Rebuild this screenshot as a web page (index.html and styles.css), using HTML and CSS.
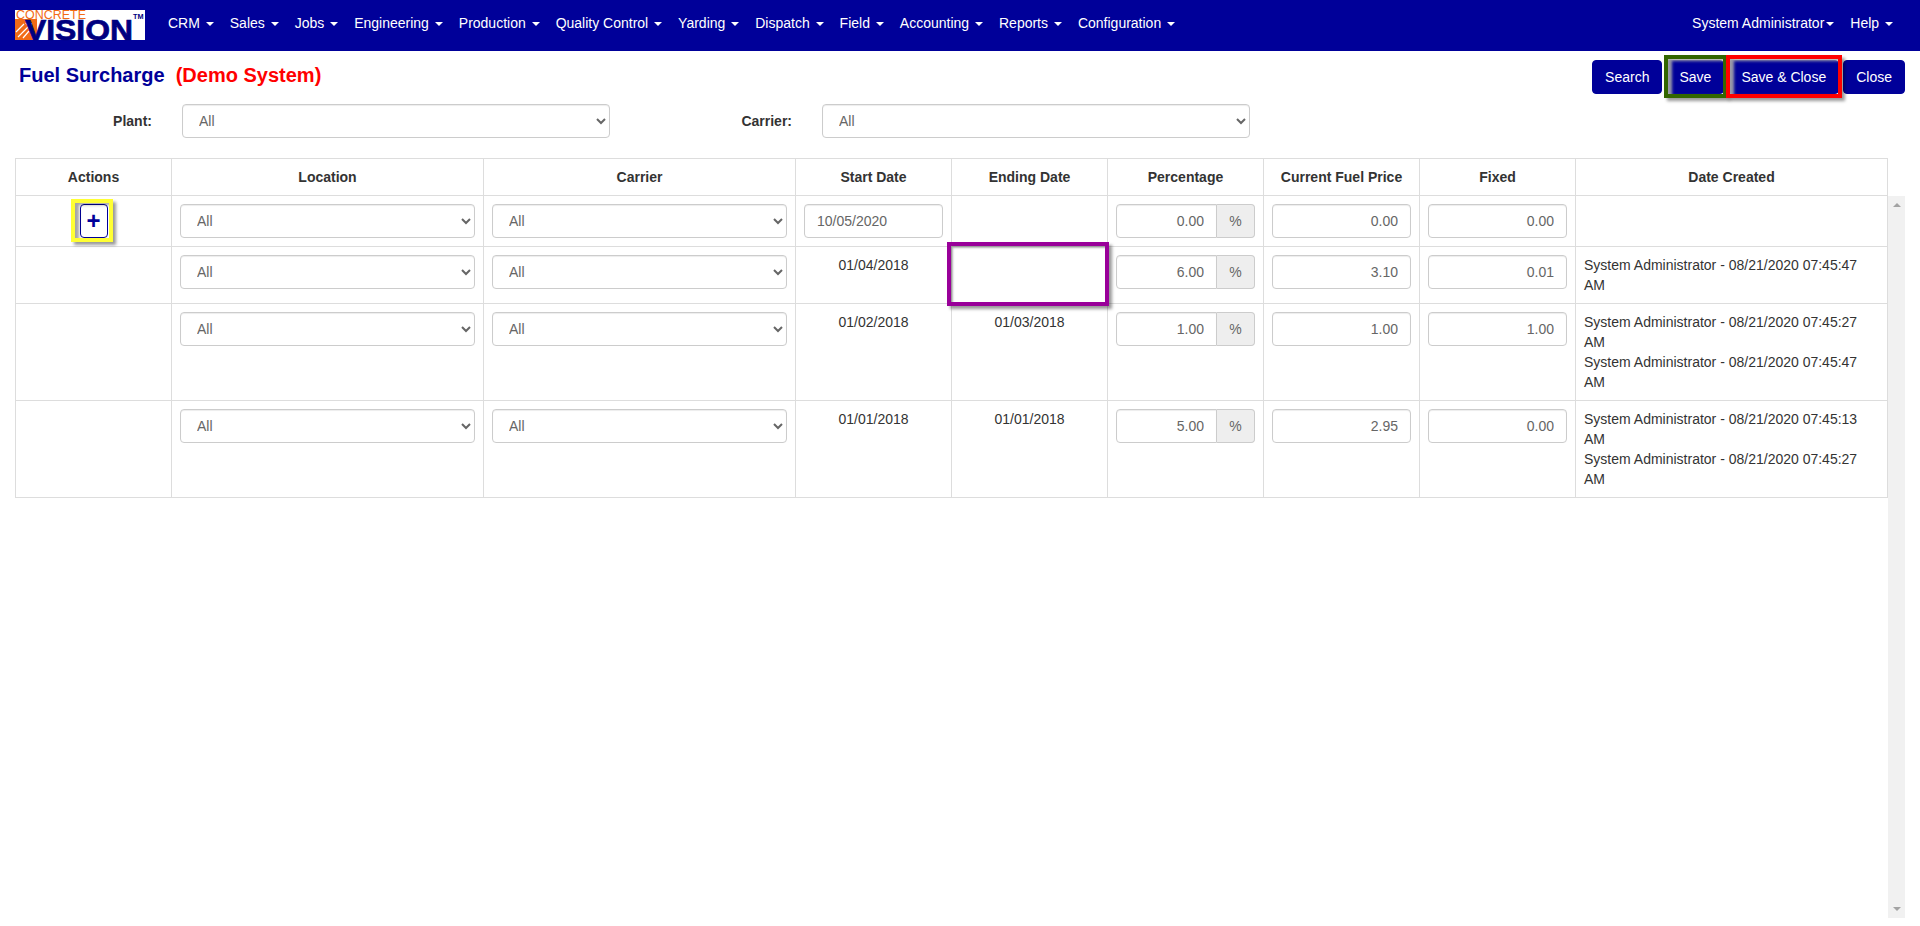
FILE: index.html
```html
<!DOCTYPE html>
<html lang="en">
<head>
<meta charset="utf-8">
<title>Fuel Surcharge</title>
<link rel="stylesheet" href="styles.css">
</head>
<body>
<nav class="navbar">
  <a class="logo" href="#">
    <svg width="130" height="40" viewBox="0 -5 130 40">
      <rect width="130" height="30" fill="#fff"/>
      <rect x="0" y="9" width="22" height="21" fill="#f26b16"/>
      <path d="M3 27 L15 15 M1 22 L9 14 M8 28 L14 21" stroke="#fff" stroke-width="1.2" fill="none"/>
      <path d="M10 13 L17 13 L17 20 Z" fill="#fff"/>
      <text x="1" y="9" class="logo-concrete" textLength="70" lengthAdjust="spacingAndGlyphs">CONCRETE</text>
      <text x="10" y="29.5" class="logo-vision" textLength="108" lengthAdjust="spacingAndGlyphs">VISION</text>
      <text x="118" y="8.7" class="logo-tm" textLength="10.5" lengthAdjust="spacingAndGlyphs">TM</text>
    </svg>
  </a>
  <ul class="menu">
    <li><a href="#">CRM <span class="caret"></span></a></li>
    <li><a href="#">Sales <span class="caret"></span></a></li>
    <li><a href="#">Jobs <span class="caret"></span></a></li>
    <li><a href="#">Engineering <span class="caret"></span></a></li>
    <li><a href="#">Production <span class="caret"></span></a></li>
    <li><a href="#">Quality Control <span class="caret"></span></a></li>
    <li><a href="#">Yarding <span class="caret"></span></a></li>
    <li><a href="#">Dispatch <span class="caret"></span></a></li>
    <li><a href="#">Field <span class="caret"></span></a></li>
    <li><a href="#">Accounting <span class="caret"></span></a></li>
    <li><a href="#">Reports <span class="caret"></span></a></li>
    <li><a href="#">Configuration <span class="caret"></span></a></li>
  </ul>
  <ul class="menu menu-right">
    <li><a href="#">System Administrator<span class="caret"></span></a></li>
    <li><a href="#">Help <span class="caret"></span></a></li>
  </ul>
</nav>

<main class="page">
  <header class="page-head">
    <h1 class="title">Fuel Surcharge <span class="demo">&nbsp;(Demo System)</span></h1>
    <div class="actions">
      <button class="btn">Search</button>
      <button class="btn ring ring-green">Save</button>
      <button class="btn ring ring-red">Save &amp; Close</button>
      <button class="btn">Close</button>
    </div>
  </header>

  <form class="filters">
    <label class="filter-label">Plant:</label>
    <select class="control"><option>All</option></select>
    <label class="filter-label">Carrier:</label>
    <select class="control"><option>All</option></select>
  </form>

  <div class="grid-wrap">
    <table class="grid">
      <colgroup>
        <col class="c1"><col class="c2"><col class="c2"><col class="c1"><col class="c1"><col class="c1"><col class="c1"><col class="c1"><col class="c2">
      </colgroup>
      <thead>
        <tr>
          <th>Actions</th><th>Location</th><th>Carrier</th><th>Start Date</th><th>Ending Date</th><th>Percentage</th><th>Current Fuel Price</th><th>Fixed</th><th>Date Created</th>
        </tr>
      </thead>
      <tbody>
        <tr>
          <td class="center"><button class="add ring ring-yellow">+</button></td>
          <td><select class="control"><option>All</option></select></td>
          <td><select class="control"><option>All</option></select></td>
          <td><input class="control" value="10/05/2020"></td>
          <td></td>
          <td><div class="group"><input class="control num" value="0.00"><span class="addon">%</span></div></td>
          <td><input class="control num" value="0.00"></td>
          <td><input class="control num" value="0.00"></td>
          <td></td>
        </tr>
        <tr>
          <td></td>
          <td><select class="control"><option>All</option></select></td>
          <td><select class="control"><option>All</option></select></td>
          <td class="center">01/04/2018</td>
          <td class="center ring-cell"></td>
          <td><div class="group"><input class="control num" value="6.00"><span class="addon">%</span></div></td>
          <td><input class="control num" value="3.10"></td>
          <td><input class="control num" value="0.01"></td>
          <td>System Administrator - 08/21/2020 07:45:47 AM</td>
        </tr>
        <tr>
          <td></td>
          <td><select class="control"><option>All</option></select></td>
          <td><select class="control"><option>All</option></select></td>
          <td class="center">01/02/2018</td>
          <td class="center">01/03/2018</td>
          <td><div class="group"><input class="control num" value="1.00"><span class="addon">%</span></div></td>
          <td><input class="control num" value="1.00"></td>
          <td><input class="control num" value="1.00"></td>
          <td>System Administrator - 08/21/2020 07:45:27 AM<br>System Administrator - 08/21/2020 07:45:47 AM</td>
        </tr>
        <tr>
          <td></td>
          <td><select class="control"><option>All</option></select></td>
          <td><select class="control"><option>All</option></select></td>
          <td class="center">01/01/2018</td>
          <td class="center">01/01/2018</td>
          <td><div class="group"><input class="control num" value="5.00"><span class="addon">%</span></div></td>
          <td><input class="control num" value="2.95"></td>
          <td><input class="control num" value="0.00"></td>
          <td>System Administrator - 08/21/2020 07:45:13 AM<br>System Administrator - 08/21/2020 07:45:27 AM</td>
        </tr>
      </tbody>
    </table>
    <div class="scrollbar"><span class="arrow-up"></span><span class="arrow-down"></span></div>
  </div>
</main>
</body>
</html>
```
FILE: styles.css
```css
* { box-sizing: border-box; }
html, body { margin: 0; height: 100%; overflow: hidden; }
body {
  font-family: "Liberation Sans", Arial, sans-serif;
  font-size: 14px;
  line-height: 20px;
  color: #333;
  background: #fff;
}

/* Navbar */
.navbar {
  display: flex;
  align-items: flex-start;
  height: 51px;
  background: #000099;
  padding-right: 19px;
}
.logo { display: block; margin: 5px 15px 0 15px; height: 40px; }
.logo svg { display: block; }
.logo-concrete { font: 12.5px "Liberation Sans", Arial, sans-serif; fill: #f26b16; }
.logo-vision { font: bold 29px "Liberation Sans", Arial, sans-serif; fill: #000080; stroke: #000080; stroke-width: .7px; }
.logo-tm { font: bold 7.5px "Liberation Sans", Arial, sans-serif; fill: #000080; }
.menu { display: flex; list-style: none; margin: 0; padding: 0; }
.menu-right { margin-left: auto; }
.menu a {
  display: block;
  padding: 13px 8px;
  color: #fff;
  text-decoration: none;
  white-space: nowrap;
}
.caret {
  display: inline-block;
  width: 0;
  height: 0;
  margin-left: 2px;
  vertical-align: middle;
  border-top: 4px solid #fff;
  border-left: 4px solid transparent;
  border-right: 4px solid transparent;
}

/* Page */
.page { padding: 9px 15px 0; }
.page-head { display: flex; justify-content: space-between; align-items: flex-start; }
.title {
  margin: 4px 0 0 4px;
  font-size: 20px;
  line-height: 22px;
  font-weight: bold;
  color: #000099;
  white-space: pre;
}
.demo { color: #f00; }
.actions { display: flex; gap: 4px; }
.btn {
  height: 34px;
  padding: 6px 12px;
  border: 1px solid #000099;
  border-radius: 4px;
  background: #000099;
  color: #fff;
  font: 14px/20px "Liberation Sans", Arial, sans-serif;
  white-space: nowrap;
}

/* Highlight rings drawn over the controls */
.ring { position: relative; }
.ring::after, .ring-cell::after {
  content: "";
  position: absolute;
  border: 4px solid;
  pointer-events: none;
  box-shadow: 3px 3px 3px rgba(0,0,0,.4), inset 4px 2px 3px rgba(170,170,170,.9);
}
.btn.ring::after { left: -3px; right: -4px; top: -6px; bottom: -5px; }
.ring-green::after { border-color: #336600; }
.ring-red::after { border-color: #f00; }
.ring-yellow::after {
  border-color: #ffff33;
  left: -10px; right: -6px; top: -6px; bottom: -5px;
  box-shadow: 3px 3px 3px rgba(0,0,0,.4), inset 4px 2px 3px rgba(0,0,0,.35);
}
.ring-cell { position: relative; }
.ring-cell::after {
  border-color: #990099;
  left: -5px; right: -2px; top: -5px; bottom: -3px;
  box-shadow: 3px 3px 3px rgba(0,0,0,.4), inset 2px 2px 2px rgba(0,0,0,.3);
  z-index: 1;
}

/* Filters */
.filters {
  display: grid;
  grid-template-columns: 167px 428px 212px 428px;
  align-items: center;
  margin-top: 10px;
}
.filter-label { text-align: right; padding-right: 30px; font-weight: bold; }

/* Form controls */
.control {
  display: block;
  width: 100%;
  height: 34px;
  padding: 6px 12px;
  border: 1px solid #ccc;
  border-radius: 4px;
  background-color: #fff;
  color: #666;
  font: 14px/20px "Liberation Sans", Arial, sans-serif;
  box-shadow: inset 0 1px 1px rgba(0,0,0,.075);
}
.num { text-align: right; }
.group { display: flex; }
.group .control { flex: 1; min-width: 0; border-radius: 4px 0 0 4px; }
.addon {
  width: 38px;
  flex: none;
  padding: 6px 0;
  text-align: center;
  color: #666;
  background: #eee;
  border: 1px solid #ccc;
  border-left: 0;
  border-radius: 0 4px 4px 0;
}

/* Grid */
.grid-wrap { display: flex; align-items: flex-start; margin-top: 20px; }
.grid {
  width: 1873px;
  flex: none;
  table-layout: fixed;
  border-collapse: collapse;
}
.c1 { width: 156px; }
.c2 { width: 312px; }
.grid th, .grid td { border: 1px solid #ddd; padding: 8px; vertical-align: top; }
.grid th { font-weight: bold; text-align: center; }
.center { text-align: center; }
.add {
  display: inline-block;
  width: 28px;
  height: 34px;
  padding: 0;
  border: 1px solid #000099;
  border-radius: 4px;
  background: #fff;
  color: #000099;
  font: bold 24px/30px "Liberation Sans", Arial, sans-serif;
  vertical-align: top;
}
.scrollbar {
  flex: none;
  display: flex;
  flex-direction: column;
  justify-content: space-between;
  align-items: center;
  width: 17px;
  height: 722px;
  margin-top: 38px;
  padding: 7px 0;
  background: #f1f1f1;
}
.arrow-up, .arrow-down { width: 0; height: 0; border-left: 4px solid transparent; border-right: 4px solid transparent; }
.arrow-up { border-bottom: 4px solid #a3a3a3; }
.arrow-down { border-top: 4px solid #a3a3a3; }
```
